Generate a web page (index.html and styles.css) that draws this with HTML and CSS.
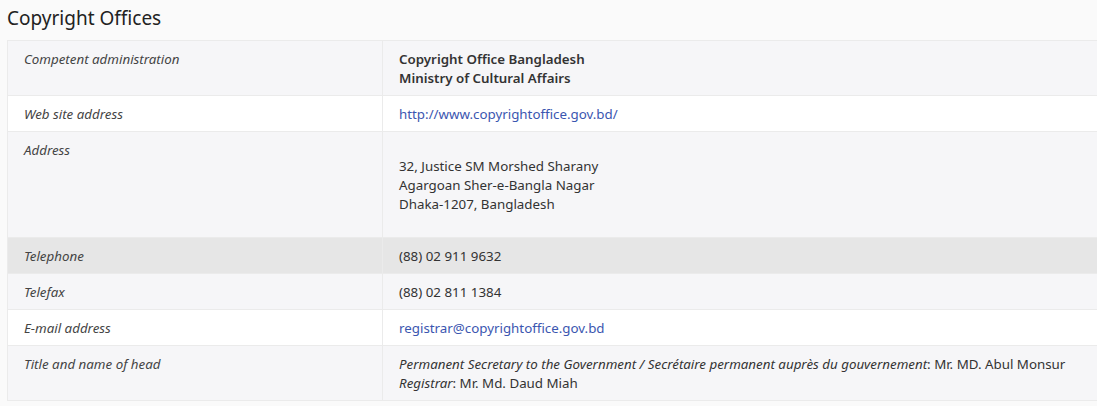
FILE: index.html
```html
<!DOCTYPE html>
<html lang="en">
<head>
    <meta charset="UTF-8">
    <title>Copyright Offices</title>
    <link rel="stylesheet" href="styles.css">
</head>
<body>
<h2 class="section-title">Copyright Offices</h2>
<table class="office-table">
    <tr>
        <td class="label">Competent administration</td>
        <td class="value"><strong>Copyright Office Bangladesh<br/>Ministry of Cultural Affairs</strong></td>
    </tr>
    <tr>
        <td class="label">Web site address</td>
        <td class="value"><a href="#">http://www.copyrightoffice.gov.bd/</a></td>
    </tr>
    <tr>
        <td class="label">Address</td>
        <td class="value"><p class="address">32, Justice SM Morshed Sharany<br/>Agargoan Sher-e-Bangla Nagar<br/>Dhaka-1207, Bangladesh</p></td>
    </tr>
    <tr class="hover">
        <td class="label">Telephone</td>
        <td class="value">(88) 02 911 9632</td>
    </tr>
    <tr>
        <td class="label">Telefax</td>
        <td class="value">(88) 02 811 1384</td>
    </tr>
    <tr>
        <td class="label">E-mail address</td>
        <td class="value"><a href="#">registrar@copyrightoffice.gov.bd</a></td>
    </tr>
    <tr>
        <td class="label">Title and name of head</td>
        <td class="value"><em>Permanent Secretary to the Government / Secrétaire permanent auprès du gouvernement</em>: Mr. MD. Abul Monsur<br/><em>Registrar</em>: Mr. Md. Daud Miah</td>
    </tr>
</table>
</body>
</html>
```

FILE: styles.css
```css
html, body {
    margin: 0;
    padding: 0;
}

body {
    background: #fafafa;
    padding: 0 0 0 7px;
    font-family: "Noto Sans", "Open Sans", sans-serif;
    font-size: 13.33px;
    line-height: 19px;
    color: #333;
    overflow: hidden;
}

.section-title {
    margin: 0;
    padding: 5px 0 8px;
    font-size: 19px;
    line-height: 27px;
    font-weight: normal;
    color: #222;
}

.office-table {
    width: 1110px;
    border-spacing: 0;
    border-collapse: collapse;
}

.office-table td {
    border: 1px solid #ebebeb;
    padding: 9px 16px 7px;
    vertical-align: top;
}

.office-table tr:nth-child(odd) {
    background: #f6f6f8;
}

.office-table tr:nth-child(even) {
    background: #fff;
}

.office-table tr.hover {
    background: #e6e6e6;
}

.office-table td.label {
    width: 342px;
    font-style: italic;
    color: #444;
}

.value strong {
    font-weight: 600;
    color: #333;
}

.value a {
    color: #3b56b0;
    text-decoration: none;
}

.address {
    margin: 16px 0 16px;
}
```
